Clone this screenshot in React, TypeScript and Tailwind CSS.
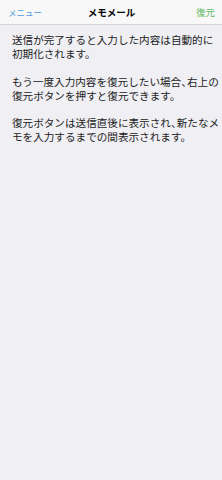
export default function App() {
  return (
    <div
      className="flex min-h-[480px] w-full flex-col bg-[#efeff4] text-black"
      style={{ fontFamily: '"Noto Sans CJK JP", "Noto Sans", sans-serif' }}
    >
      <header className="flex h-[25px] items-center justify-between border-b border-[#d6d6da] bg-[#f8f8f8] pl-[8px] pr-[7px]">
        <span className="w-[40px] text-[8.5px] text-[#4d9bdc]">メニュー</span>
        <span className="text-[9.5px] font-bold">メモメール</span>
        <span className="w-[40px] text-right text-[9.5px] text-[#5cb85c]">復元</span>
      </header>
      <main className="flex flex-col gap-[13.5px] px-[12px] pt-[8px] text-[10.6px] leading-[14px] text-[#222] whitespace-nowrap">
        <p>
          送信が完了すると入力した内容は自動的に
          <br />
          初期化されます。
        </p>
        <p>
          もう一度入力内容を復元したい場合<span className="tracking-[-0.45em]">、</span>右上の
          <br />
          復元ボタンを押すと復元できます。
        </p>
        <p>
          復元ボタンは送信直後に表示され<span className="tracking-[-0.45em]">、</span>新たなメ
          <br />
          モを入力するまでの間表示されます。
        </p>
      </main>
    </div>
  );
}
